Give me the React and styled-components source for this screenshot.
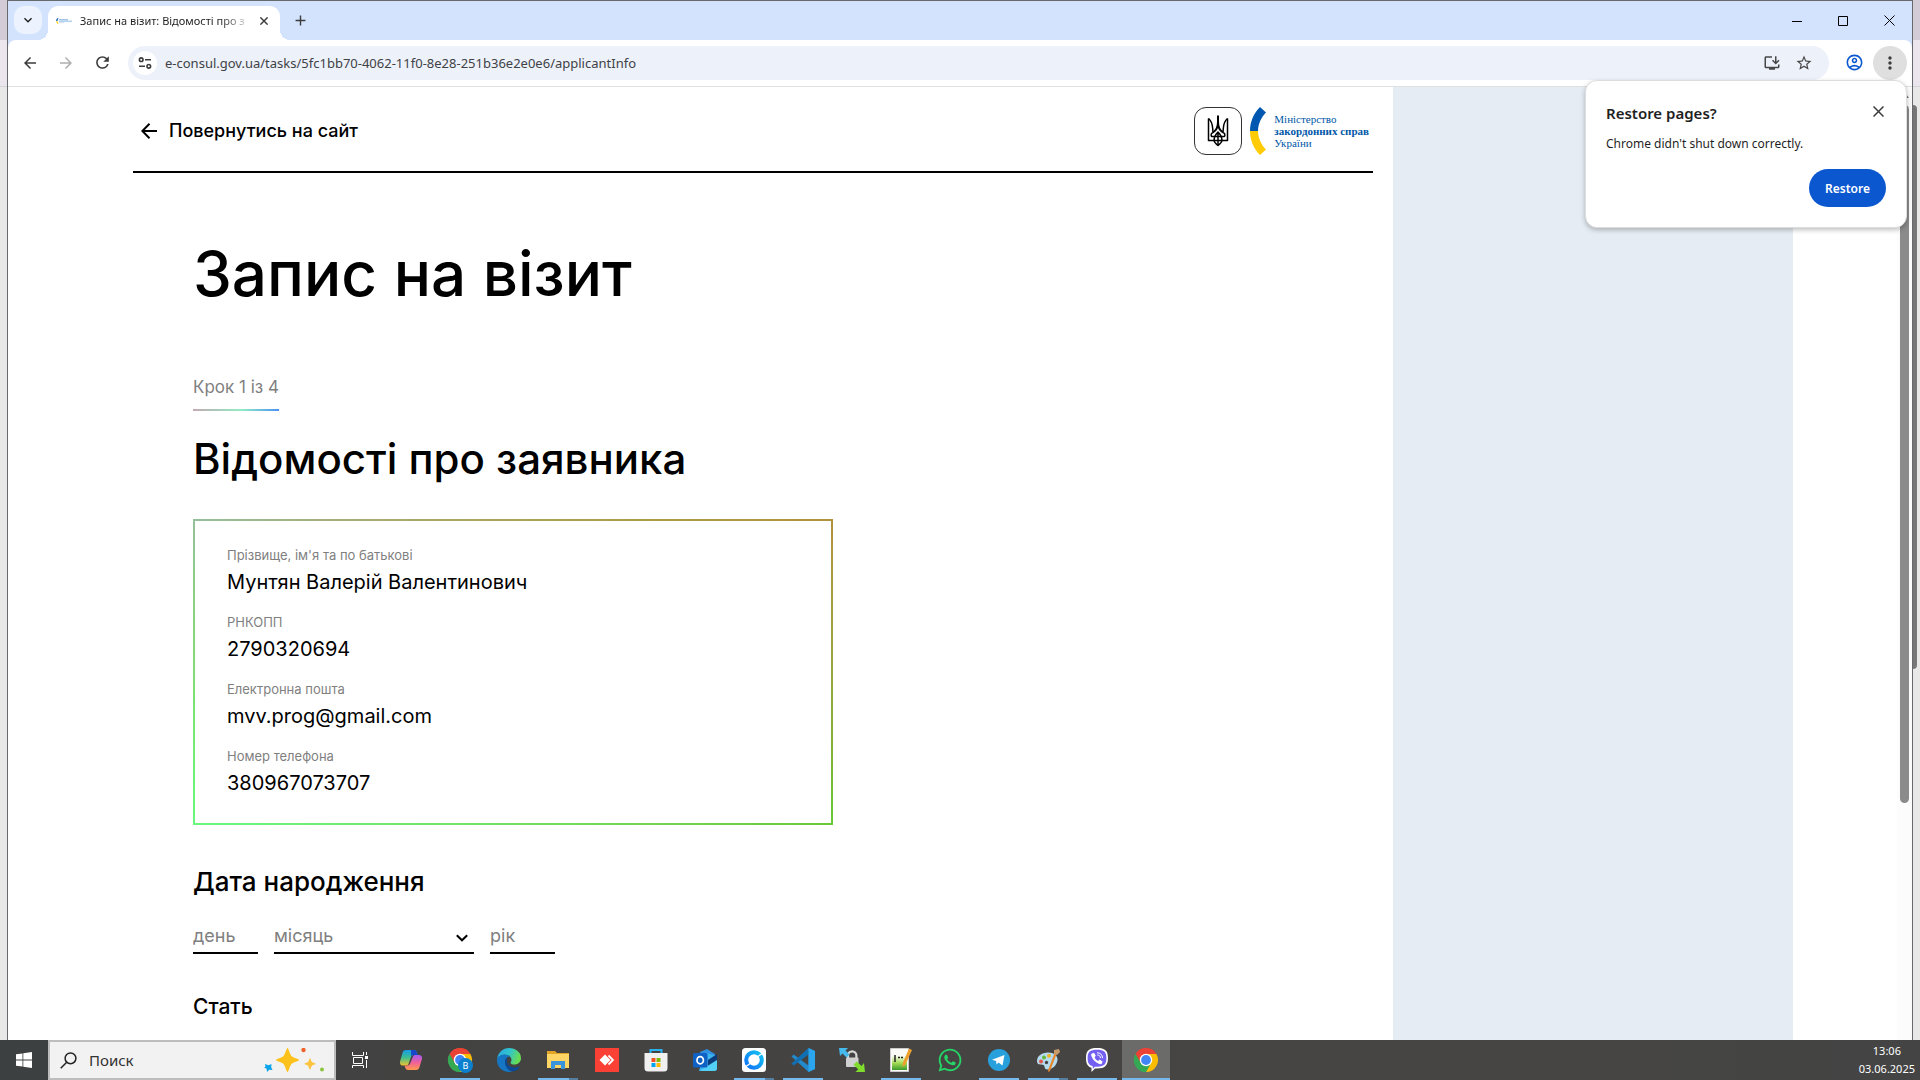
import React from "react";
import styled, { createGlobalStyle, css } from "styled-components";
import {
  MdArrowBack, MdArrowForward, MdRefresh, MdStarBorder, MdOutlineInstallDesktop,
  MdOutlineAccountCircle, MdMoreVert, MdAdd, MdKeyboardArrowDown,
} from "react-icons/md";
import { FaWhatsapp } from "react-icons/fa";

const uiFont = `"Segoe UI", "Noto Sans", "Open Sans", sans-serif`;
const siteFont = `"e-Ukraine", Inter, "Liberation Sans", sans-serif`;

const GlobalStyle = createGlobalStyle`
  *, *::before, *::after { box-sizing: border-box; }
  body { margin: 0; overflow: hidden; font-family: ${uiFont}; }
  button, input, select { font: inherit; color: inherit; border: 0; padding: 0; margin: 0; background: none; outline: 0; }
  h1, h2, h3, p, dl, dd { margin: 0; font-weight: inherit; }
  a { color: inherit; text-decoration: none; }
  svg { display: block; flex: none; }
`;

/* ---------- desktop and window ---------- */
const Desktop = styled.div`
  display: flex;
  flex-direction: column;
  height: 100vh;
`;
const Stage = styled.div`
  flex: 1;
  min-height: 0;
  display: flex;
  background: linear-gradient(#d3cbd6 0 40px, #ebe5ee 40px 86px, #d5d3d6 86px 87px, #e8e8e8 87px);
`;
const Edge = styled.div`
  width: 7px;
  flex: none;
  display: flex;
  flex-direction: column;
`;
const BackThumb = styled.div`
  width: 4px;
  height: 564px;
  margin-top: 105px;
  background: #777;
  border-radius: 0 4px 4px 0;
`;
const Window = styled.div`
  position: relative;
  flex: 1;
  min-width: 0;
  display: flex;
  flex-direction: column;
  border: 1px solid #68696c;
  border-bottom: 0;
  background: #d3e3fd;
`;

/* ---------- tab strip ---------- */
const TabStrip = styled.div`
  display: flex;
  align-items: flex-end;
  height: 39px;
  flex: none;
  padding-left: 6px;
`;
const TabSearch = styled.button`
  display: grid;
  place-items: center;
  width: 28px;
  height: 28px;
  margin: 0 6px 6px 0;
  border-radius: 10px;
  background: #ecf3fe;
  color: #1f1f1f;
`;
const Tab = styled.div`
  position: relative;
  display: flex;
  align-items: center;
  gap: 8px;
  width: 232px;
  height: 34px;
  padding: 0 8px 4px 8px;
  border-radius: 10px 10px 0 0;
  background: #fff;
  &::before, &::after {
    content: "";
    position: absolute;
    bottom: 0;
    width: 10px;
    height: 10px;
  }
  &::before { left: -10px; background: radial-gradient(circle at 0 0, transparent 10px, #fff 10px); }
  &::after { right: -10px; background: radial-gradient(circle at 100% 0, transparent 10px, #fff 10px); }
`;
const TabTitle = styled.span`
  flex: 1;
  white-space: nowrap;
  font-size: 11px;
  line-height: 16px;
  color: #1f1f1f;
  mask-image: linear-gradient(90deg, #000 140px, transparent 172px);
`;
const PlainButton = styled.button`
  display: grid;
  place-items: center;
  width: ${(p) => p.$w || 16}px;
  height: ${(p) => p.$h || 16}px;
  color: ${(p) => p.$color || "#3c3c3c"};
`;
const NewTab = styled(PlainButton)`
  margin: 0 0 6px 6px;
`;
const WindowButtons = styled.div`
  display: flex;
  margin-left: auto;
  align-self: flex-start;
`;

/* ---------- toolbar ---------- */
const Toolbar = styled.div`
  display: flex;
  align-items: center;
  flex: none;
  height: 47px;
  padding: 0 5px 1px 4px;
  background: #fff;
  border-bottom: 1px solid #dfe1e0;
  border-radius: 8px 8px 0 0;
`;
const Omnibox = styled.label`
  flex: 1;
  display: flex;
  align-items: center;
  height: 34px;
  margin: 0 16px 0 8px;
  padding: 0 15px 0 5px;
  border-radius: 17px;
  background: #edf1fa;
  color: #444;
`;
const SiteInfo = styled.span`
  display: grid;
  place-items: center;
  width: 24px;
  height: 24px;
  border-radius: 50%;
  background: #fff;
`;
const Address = styled.input`
  flex: 1;
  min-width: 0;
  height: 20px;
  margin-left: 8px;
  font-size: 13px;
  line-height: 20px;
  color: #404246;
`;
const OmniActions = styled.span`
  display: flex;
  gap: 12px;
`;
const MenuButton = styled(PlainButton)`
  margin-left: 10px;
  border-radius: 50%;
  background: #dfdfdf;
`;

/* ---------- restore bubble ---------- */
const Bubble = styled.div`
  position: absolute;
  top: 79px;
  right: 5px;
  z-index: 2;
  display: flex;
  flex-direction: column;
  width: 322px;
  padding: 20px;
  border: 1px solid #dcdddf;
  border-radius: 12px;
  background: #fff;
  box-shadow: 0 2px 5px rgba(0, 0, 0, 0.25);
  color: #1f1f1f;
`;
const BubbleHead = styled.div`
  display: flex;
  justify-content: space-between;
  font-size: 15px;
  font-weight: 600;
  line-height: 24px;
`;
const BubbleText = styled.p`
  margin: 10px 0 16px;
  font-size: 12px;
  line-height: 18px;
`;
const RestoreButton = styled.button`
  align-self: flex-end;
  width: 77px;
  height: 38px;
  border-radius: 19px;
  background: #0b57d0;
  color: #fff;
  font-size: 12px;
  font-weight: 600;
`;

/* ---------- page ---------- */
const Viewport = styled.div`
  flex: 1;
  min-height: 0;
  display: flex;
  background: #fff;
`;
const ScrollTrack = styled.div`
  display: flex;
  flex-direction: column;
  align-items: center;
  width: 15px;
  padding-top: 5px;
  background: #fcfcfc;
  color: #777;
`;
const ScrollThumb = styled.div`
  width: 9px;
  height: 698px;
  margin-top: 7px;
  border-radius: 5px;
  background: #8b8b8b;
`;
const Page = styled.div`
  flex: 1;
  min-width: 0;
  display: grid;
  grid-template-columns: minmax(0, 1fr) 400px 104px;
  overflow: hidden;
  font-family: ${siteFont};
  color: #000;
`;
const Aside = styled.aside`
  background: #e5ecf3;
`;
const Main = styled.main`
  padding: 0 20px 0 125px;
`;
const SiteHeader = styled.header`
  display: flex;
  align-items: center;
  justify-content: space-between;
  height: 86px;
  padding: 4px 4px 0 8px;
  border-bottom: 2px solid #000;
`;
const BackLink = styled.a`
  display: flex;
  align-items: center;
  gap: 12px;
  font-size: 18px;
  line-height: 24px;
  font-weight: 500;
`;
const Logos = styled.div`
  display: flex;
  align-items: center;
  gap: 8px;
`;
const Emblem = styled.div`
  display: grid;
  place-items: center;
  width: 48px;
  height: 48px;
  border: 1px solid #333;
  border-radius: 12px;
`;
const Ministry = styled.div`
  display: flex;
  flex-direction: column;
  font-family: "Roboto Slab", "Liberation Serif", serif;
  font-size: 11px;
  line-height: 12px;
  color: #0057a8;
`;
const Content = styled.div`
  padding: 63px 60px 0;
`;
const Title = styled.h1`
  font-size: 62px;
  line-height: 76px;
  font-weight: 500;
`;
const Step = styled.p`
  width: max-content;
  margin-top: 51px;
  padding: 12px 0 10px;
  border-bottom: 2px solid;
  border-image: linear-gradient(90deg, #c3a8b0, #92ecc4 56%, #4a8ff5) 1;
  font-size: 17px;
  line-height: 24px;
  color: #7f7f7f;
`;
const SectionTitle = styled.h2`
  margin: 24px 0 36px;
  font-size: 42px;
  line-height: 48px;
  font-weight: 500;
`;
const Card = styled.dl`
  display: flex;
  flex-direction: column;
  gap: 15px;
  max-width: 640px;
  padding: 24px 32px 25px;
  border: 2px solid transparent;
  background:
    linear-gradient(#fff, #fff) padding-box,
    linear-gradient(to top right, #68f97a, rgba(104, 249, 122, 0) 60%) border-box,
    linear-gradient(to bottom left, #b0923c, rgba(176, 146, 60, 0) 50%) border-box,
    linear-gradient(to bottom right, #9db5a2, #a9b565 30%, #68c02a) border-box;
`;
const Field = styled.div`
  dt {
    font-size: 13px;
    line-height: 20px;
    color: #7f7f7f;
  }
  dd {
    padding-top: 3px;
    font-size: 20px;
    line-height: 29px;
  }
`;
const GroupTitle = styled.h3`
  margin-top: ${(p) => p.$top}px;
  font-size: ${(p) => p.$size}px;
  line-height: 32px;
  font-weight: 500;
`;
const DateRow = styled.div`
  display: flex;
  gap: 16px;
  margin-top: 22px;
`;
const control = css`
  height: 34px;
  padding-bottom: 1px;
  border-bottom: 2px solid #000;
  font-size: 18px;
  line-height: 28px;
  color: #7f7f7f;
  border-radius: 0;
`;
const DateInput = styled.input`
  ${control}
  width: 65px;
  &::placeholder { color: #7f7f7f; opacity: 1; }
`;
const MonthBox = styled.div`
  position: relative;
  svg {
    position: absolute;
    right: 6px;
    top: 14px;
    pointer-events: none;
  }
`;
const MonthSelect = styled.select`
  ${control}
  width: 200px;
  appearance: none;
`;

/* ---------- taskbar ---------- */
const Taskbar = styled.footer`
  display: flex;
  flex: none;
  height: 40px;
  background: linear-gradient(90deg, #3c4041, #444341 30%, #464543 70%, #444);
  color: #fff;
`;
const TaskButton = styled.button`
  position: relative;
  display: grid;
  place-items: center;
  width: 48px;
  height: 40px;
  background: ${(p) => (p.$active ? "#6b6b6a" : "none")};
  &::after {
    content: "";
    display: ${(p) => (p.$running ? "block" : "none")};
    position: absolute;
    bottom: 0;
    left: ${(p) => (p.$active ? 0 : 4)}px;
    right: ${(p) => (p.$active ? 0 : 4)}px;
    height: 2px;
    background: ${(p) =>
      p.$stacked
        ? "linear-gradient(90deg, #76b9ed 31px, #567f9f 31px)"
        : "#76b9ed"};
  }
`;
const SearchBox = styled.label`
  display: flex;
  align-items: center;
  width: 288px;
  padding: 0 10px;
  border: 2px solid #bdbdbd;
  background: #f2f2f2;
  color: #222;
`;
const SearchInput = styled.input`
  flex: 1;
  min-width: 0;
  margin-left: 12px;
  font-size: 15px;
  line-height: 20px;
  &::placeholder { color: #333; opacity: 1; }
`;
const Apps = styled.nav`
  display: flex;
  gap: 1px;
  margin-left: 3px;
`;
const Clock = styled.div`
  display: flex;
  flex-direction: column;
  align-items: center;
  justify-content: center;
  margin-left: auto;
  padding-right: 5px;
  font-size: 11px;
  line-height: 18px;
`;

/* ---------- drawings ---------- */
const CloseX = ({ size = 11, stroke = 1 }) => (
  <svg width={size} height={size} viewBox="0 0 11 11" stroke="currentColor" strokeWidth={stroke}>
    <path d="M.5 .5l10 10M10.5 .5l-10 10" />
  </svg>
);
const Favicon = () => (
  <svg width="16" height="16" viewBox="0 0 16 16">
    <path d="M2 5C0 6 .3 7 .3 8H1.500C1.500 7 2 6 2.500 5.500z" fill="#0057b8" />
    <path d="M.3 8c0 1 .5 2.500 1.700 3l.5-.7C1.700 9.500 1.500 9 1.500 8z" fill="#fc0" />
    <rect x="3" y="6" width="9" height="1.500" fill="#9fc3e6" />
    <rect x="3" y="7.500" width="13" height="1.600" fill="#b5d3ee" />
    <rect x="3" y="9.100" width="5" height="1" fill="#cfe1f2" />
  </svg>
);
const Tune = () => (
  <svg width="14" height="14" viewBox="0 0 14 14" fill="none" stroke="#3c3c3c" strokeWidth="1.600">
    <circle cx="3.200" cy="3.700" r="1.800" />
    <path d="M7 3.700h6M1 10.300h6" />
    <circle cx="10.800" cy="10.300" r="1.800" />
  </svg>
);
const Trident = () => (
  <svg width="22" height="34" viewBox="0 0 22 34" fill="none" stroke="#000" strokeWidth="1.500" strokeLinejoin="round">
    <path d="M11 1.500v9M11 8c0 5-1 8-5 10.500M11 8c0 5 1 8 5 10.500" strokeWidth="2" />
    <path d="M1.500 4.500v22h5.500c.3 2 1.800 3.200 4 5 2.200-1.800 3.700-3 4-5h5.500v-22" />
    <path d="M1.500 4.500c3 2.500 4 6 4.200 10l.3 4c-1.800.5-2.300 2-1.500 4h13c.8-2 .3-3.500-1.500-4l.3-4c.2-4 1.200-7.500 4.200-10" />
    <path d="M11 18v13M7 26.500c0-3.500 1.500-6 4-8.500 2.500 2.500 4 5 4 8.500M7 26.500h8" />
  </svg>
);
const Arc = () => (
  <svg width="16" height="48" viewBox="0 0 16 48">
    <path d="M10 0l6 5.500C11.500 10 8 17 8 24H0C0 15 3.500 6.500 10 0z" fill="#0057b0" />
    <path d="M10 48l6-5.500C11.500 38 8 31 8 24H0c0 9 3.500 17.500 10 24z" fill="#ffcb05" />
  </svg>
);
const BackArrow = () => (
  <svg width="16" height="16" viewBox="0 0 16 16" fill="none" stroke="#000" strokeWidth="2">
    <path d="M16 8H1.500M8.500 .8L1.300 8l7.200 7.200" />
  </svg>
);
const Chevron = () => (
  <svg width="12" height="8" viewBox="0 0 12 8" fill="none" stroke="#000" strokeWidth="2">
    <path d="M.8 1.200L6 6.300l5.200-5.100" />
  </svg>
);
const Sparkles = () => (
  <svg width="60" height="24" viewBox="0 0 60 24">
    <path d="M23.500 0c1 0 2.500 7 4.500 8.500S35 11 35 12s-5 2-7 3.500S24.500 24 23.500 24 21 17 19 15.500 12 13 12 12s5-2 7-3.500S22.500 0 23.500 0z" fill="#fcc21b" />
    <path d="M46 10c.6 0 1 3 2 4s3.500 1 3.500 1.700-2.500 1-3.500 2-1.400 4-2 4-1-3-2-4-3.500-1.300-3.500-2 2.500-.7 3.500-1.700 1.400-4 2-4z" fill="#fbc440" />
    <path d="M1 16l3.500 1.300L7.500 16l-.3 3.200L8.500 22l-3.200-.3L3 24l-.4-3.200L0 19.300l1.500-.6z" fill="#0ba4e8" />
    <circle cx="39.500" cy="2" r="2.200" fill="#f0622a" />
    <circle cx="58" cy="21.500" r="2" fill="#8bc540" />
  </svg>
);
const WindowsLogo = () => (
  <svg width="16" height="16" viewBox="0 0 16 16" fill="#fff">
    <path d="M0 2.300L6.500 1.400V7.600H0zM7.300 1.300L16 0v7.600H7.300zM0 8.400h6.500v6.200L0 13.700zM7.300 8.400H16V16l-8.700-1.300z" />
  </svg>
);
const Magnifier = () => (
  <svg width="17" height="17" viewBox="0 0 17 17" fill="none" stroke="#222" strokeWidth="1.500">
    <circle cx="10.500" cy="6.300" r="5.400" />
    <path d="M6.700 10.300L.7 16.300" />
  </svg>
);
const TaskView = () => (
  <svg width="16" height="16" viewBox="0 0 16 16" fill="none" stroke="#fff">
    <path d="M.5 0v3.500h11V0M.5 16v-2.500h11V16M1.500 5.500h9v6h-9zM14.500 0v3M14.500 8v8" />
    <path d="M13 4h3v3h-3z" fill="#fff" stroke="none" />
  </svg>
);
const Copilot = () => (
  <svg width="22" height="20" viewBox="0 0 22 20">
    <defs>
      <linearGradient id="cpA" x1="0" y1="0" x2="0" y2="1">
        <stop offset="0" stopColor="#169bea" /><stop offset=".5" stopColor="#3fbf8f" /><stop offset="1" stopColor="#f2c32c" />
      </linearGradient>
      <linearGradient id="cpB" x1="0" y1="0" x2="0" y2="1">
        <stop offset="0" stopColor="#a45cf0" /><stop offset=".5" stopColor="#f0609a" /><stop offset="1" stopColor="#ff9a4a" />
      </linearGradient>
    </defs>
    <path d="M6 0h8c2 0 2.500 1.500 3 3l.7 2H14c-2 0-2.700 1-3.200 2.500L8.500 14c-.5 1.300-1.200 1.500-2.500 1.500H3c-2.500 0-3.500-2-2.800-4.500L2.500 3C3 1.200 4 0 6 0z" fill="url(#cpA)" />
    <path d="M16 20H8c-2 0-2.500-1.500-3-3l-.5-1.500H7c2 0 2.800-1 3.300-2.500L13 6.500C13.500 5.200 14.500 5 15.500 5H19c2.500 0 3.500 2 2.800 4.500L19.500 17c-.5 1.800-1.500 3-3.500 3z" fill="url(#cpB)" />
    <path d="M11 0h3c2 0 2.500 1.500 3 3l.7 2H14c-1.500 0-2.300.6-2.800 1.500z" fill="#1746c8" />
  </svg>
);
const Chrome = ({ badge }) => (
  <svg width="26" height="26" viewBox="0 0 26 26">
    <path d="M13 13L2.600 7A12 12 0 0 1 23.400 7z" fill="#ea4335" />
    <path d="M13 13L23.400 7A12 12 0 0 1 13 25z" fill="#fbbc04" />
    <path d="M13 13v12A12 12 0 0 1 2.600 7z" fill="#34a853" />
    <path d="M13 7h10.400L18.200 16 13 25l5.200-9z" fill="#fbbc04" />
    <path d="M2.600 7l5.200 9L13 19l5.200-3L13 25A12 12 0 0 1 2.600 7z" fill="#34a853" />
    <path d="M2.600 7A12 12 0 0 1 23.400 7H13L7.800 16z" fill="#ea4335" />
    <circle cx="13" cy="13" r="6.200" fill="#fff" />
    <circle cx="13" cy="13" r="4.900" fill="#4285f4" />
    {badge && <circle cx="18.500" cy="18.500" r="7.500" fill="#0b80cf" />}
    {badge && <text x="18.500" y="22" fontSize="9" fill="#fff" textAnchor="middle">{badge}</text>}
  </svg>
);
const EdgeLogo = () => (
  <svg width="24" height="24" viewBox="0 0 24 24">
    <defs>
      <linearGradient id="edA" x1="0" y1="0" x2="1" y2="0.300">
        <stop offset="0" stopColor="#2aa5e6" /><stop offset=".55" stopColor="#31c4cc" /><stop offset="1" stopColor="#66dc55" />
      </linearGradient>
    </defs>
    <path d="M0 11C1 4.500 6 0 12 0c7 0 12 4.500 12 10 0 4-3 6.500-6.500 6.500-2.500 0-4-1-4-1.800 0-.7 1-1 1-3 0-2.500-2.500-5-6.500-5S1 8.500 0 11z" fill="url(#edA)" />
    <path d="M0 11c1-3 4-4.500 7.500-4.500 2.500 0 4.500.8 5.700 2C10 8.500 8 11 8 14c0 5 4 9 8 9.300C10 25.500 0 22 0 12z" fill="#1577c4" />
    <path d="M10.300 9.500C8.500 10.700 8 12.500 8 14c0 5 4 9.300 8 9.300 3 0 6-2.800 6.500-4.300.2-.5-.2-.8-.7-.5-4.500 2.500-11.500.5-11.800-5 0-1.500.1-2.800.3-4z" fill="#0c4a95" />
  </svg>
);
const Explorer = () => (
  <svg width="22" height="20" viewBox="0 0 22 20">
    <path d="M0 1h8l2 2h12v15H0z" fill="#e0a526" />
    <path d="M0 4h22v14H0z" fill="#ffd666" />
    <path d="M4 11h14v8h-4v-4H8v4H4z" fill="#3a94dc" />
  </svg>
);
const AnyDesk = () => (
  <svg width="24" height="24" viewBox="0 0 24 24">
    <path d="M0 0h24v24H0z" fill="#fb4135" />
    <path d="M10 6.500l5.500 5.500-5.500 5.500L4.500 12z" fill="#fff" />
    <path d="M13.500 7.500L18 12l-4.500 4.500" fill="none" stroke="#fff" strokeWidth="1.800" />
  </svg>
);
const Store = () => (
  <svg width="24" height="24" viewBox="0 0 24 24">
    <path d="M6.500 6V2h11v4" fill="none" stroke="#2bb0ee" strokeWidth="2" />
    <path d="M.5 5h23v15a3.500 3.500 0 0 1-3.500 3.500H4A3.500 3.500 0 0 1 .5 20z" fill="#f0f0f0" />
    <path d="M7.500 10H11.500v4H7.500z" fill="#f25022" /><path d="M12.500 10h4v4h-4z" fill="#7fba00" />
    <path d="M7.500 15h4v4H7.500z" fill="#00a4ef" /><path d="M12.500 15h4v4h-4z" fill="#ffb900" />
  </svg>
);
const Outlook = () => (
  <svg width="24" height="24" viewBox="0 0 24 24">
    <path d="M7 4l7-3 8 5v6H7z" fill="#2f8fe0" />
    <path d="M14 5l10 3v12a3 3 0 0 1-3 3H6l2-7z" fill="#3cb4ee" />
    <path d="M15 12l9-6v8l-9 5z" fill="#0d3c7d" />
    <path d="M8 22L24 12v8a3 3 0 0 1-3 3H8z" fill="#52d0f5" />
    <rect y="5" width="14.500" height="14.500" rx="1.500" fill="#0f62c4" />
    <ellipse cx="7.200" cy="12.200" rx="3.200" ry="3.600" fill="none" stroke="#fff" strokeWidth="1.700" />
  </svg>
);
const RustDesk = () => (
  <svg width="24" height="24" viewBox="0 0 24 24">
    <defs>
      <linearGradient id="rdA" x1="0" y1="1" x2="1" y2="0">
        <stop offset="0" stopColor="#1272f7" /><stop offset="1" stopColor="#12c2f0" />
      </linearGradient>
    </defs>
    <rect width="24" height="24" rx="3.500" fill="#fff" />
    <circle cx="12" cy="12" r="7.800" fill="none" stroke="url(#rdA)" strokeWidth="4" />
    <path d="M2.500 19.500l6-4.200M21.500 4.500l-6 4.200" stroke="#fff" strokeWidth="1.300" />
  </svg>
);
const VsCode = () => (
  <svg width="24" height="24" viewBox="0 0 24 24">
    <path d="M17.500 0L24 3v18l-6.500 3L.5 8.500 2.700 6.500 17.500 17.500z" fill="#2489ca" />
    <path d="M17.500 0v6.500L2.700 17.500.5 15.500z" fill="#1070b3" />
    <path d="M17.500 0L24 3v18l-6.500 3z" fill="#2ba6ee" />
  </svg>
);
const SyncLock = () => (
  <svg width="26" height="24" viewBox="0 0 26 24">
    <path d="M9 10V7.500a4.200 4.200 0 0 1 8.400 0V10" fill="none" stroke="#d8d8d8" strokeWidth="2.200" />
    <rect x="7" y="9.500" width="12.500" height="9.500" rx="1" fill="#d0d0d0" />
    <path d="M0 0h9L6.500 2.500l4 4-3 3-4-4L1 8z" fill="#45b8ec" />
    <path d="M26 24h-9.500l2.700-2.700-4.700-4.500 3.300-3.300 4.700 4.500L25 15z" fill="#7fdb2c" />
  </svg>
);
const NotepadPP = () => (
  <svg width="24" height="24" viewBox="0 0 24 24">
    <defs>
      <linearGradient id="npA" x1="0" y1="0" x2="0" y2="1">
        <stop offset="0" stopColor="#f6fbea" /><stop offset=".5" stopColor="#a4dc55" /><stop offset="1" stopColor="#3c9a2c" />
      </linearGradient>
    </defs>
    <path d="M1.500 .5h18v23h-18z" fill="#fafaf6" stroke="#ccc" />
    <path d="M3 8h15v14H3z" fill="url(#npA)" />
    <path d="M6 7v7" stroke="#222" strokeWidth="1.500" />
    <path d="M9 9.500h2M12 9.500h2" stroke="#222" strokeWidth="1.500" />
    <path d="M20 .5l3 1.500-6.500 14.500-3 2.500.3-4z" fill="#eda02c" />
  </svg>
);
const Paint = () => (
  <svg width="24" height="24" viewBox="0 0 24 24">
    <path d="M1 13c0-5 5-8.500 11-8.500S22 8 21.500 12c-.5 5-5 9.500-10 9.500-4 0-2-3.500-4-4.500S1 18 1 13z" fill="#b5dbee" />
    <circle cx="5" cy="13.500" r="2" fill="#e2574c" /><circle cx="8" cy="9.500" r="2" fill="#67b83c" />
    <circle cx="13" cy="7.800" r="2" fill="#f0b429" /><circle cx="10.500" cy="14.500" r="1.700" fill="#444" />
    <path d="M19 4l2 1-7 18-2 1 .5-3z" fill="#e8872b" />
    <path d="M18 2l5-1 1 3-3 3-3-1z" fill="#c79a6b" />
  </svg>
);
const Viber = () => (
  <svg width="24" height="24" viewBox="0 0 24 24">
    <path d="M12 0c8 0 11 2.500 11 10s-3 10.500-11 10.500h-2L6.500 24v-4.200C2.500 18.500 1 15.500 1 10 1 2.500 4 0 12 0z" fill="#fff" />
    <path d="M12 1.700c7 0 9.400 2 9.400 8.300s-2.400 8.700-9.400 8.700H9.700L7.800 21v-2.700C4 17.200 2.600 14.800 2.600 10 2.600 3.700 5 1.700 12 1.700z" fill="#7360f2" />
    <path d="M7 5.500l2-.8 1.800 3-1.200 1.600c.6 1.800 1.700 2.900 3.500 3.600l1.500-1.300 3 1.900-.9 2.200c-1 .9-2 .6-3 .1C10 14 7.500 11.500 6.200 7.500 6 6.600 6.200 6 7 5.500z" fill="#fff" />
    <path d="M12 4.800c3.500 0 5.500 2 5.500 5.400M12.300 7c2 0 3 1 3.100 3.100" fill="none" stroke="#fff" strokeWidth="1" />
  </svg>
);
const TelegramIcon = () => (
  <svg width="22" height="22" viewBox="0 0 22 22">
    <circle cx="11" cy="11" r="11" fill="#28a0dc" />
    <path d="M4 10.800L16.500 6l-2 10.500-4-3-2 2-.4-3.400z" fill="#fff" />
  </svg>
);

const person = [
  ["Прізвище, ім'я та по батькові", "Мунтян Валерій Валентинович"],
  ["РНКОПП", "2790320694"],
  ["Електронна пошта", "mvv.prog@gmail.com"],
  ["Номер телефона", "380967073707"],
];

const apps = [
  { name: "Copilot", icon: <Copilot /> },
  { name: "Chrome B", icon: <Chrome badge="B" />, running: true },
  { name: "Edge", icon: <EdgeLogo /> },
  { name: "Explorer", icon: <Explorer />, running: true, stacked: true },
  { name: "AnyDesk", icon: <AnyDesk /> },
  { name: "Store", icon: <Store /> },
  { name: "Outlook", icon: <Outlook /> },
  { name: "RustDesk", icon: <RustDesk />, running: true, stacked: true },
  { name: "VS Code", icon: <VsCode />, running: true },
  { name: "WinSCP", icon: <SyncLock /> },
  { name: "Notepad++", icon: <NotepadPP />, running: true },
  { name: "WhatsApp", icon: <FaWhatsapp size={26} color="#25d366" /> },
  { name: "Telegram", icon: <TelegramIcon />, running: true },
  { name: "Paint", icon: <Paint />, running: true, stacked: true },
  { name: "Viber", icon: <Viber />, running: true },
  { name: "Chrome", icon: <Chrome />, running: true, active: true },
];

export default function App() {
  return (
    <Desktop>
      <GlobalStyle />
      <Stage>
        <Edge />
        <Window>
          <TabStrip>
            <TabSearch aria-label="Search tabs"><MdKeyboardArrowDown size={16} /></TabSearch>
            <Tab>
              <Favicon />
              <TabTitle>Запис на візит: Відомості про з</TabTitle>
              <PlainButton aria-label="Close tab"><CloseX size={8} stroke={2} /></PlainButton>
            </Tab>
            <NewTab $w={28} $h={28} aria-label="New tab"><MdAdd size={17} /></NewTab>
            <WindowButtons>
              <PlainButton $w={46} $h={39} $color="#000" aria-label="Minimize">
                <svg width="10" height="10" viewBox="0 0 10 10" stroke="#000"><path d="M0 5.500h10" /></svg>
              </PlainButton>
              <PlainButton $w={46} $h={39} $color="#000" aria-label="Maximize">
                <svg width="10" height="10" viewBox="0 0 10 10" fill="none" stroke="#000"><path d="M.5 .5h9v9h-9z" /></svg>
              </PlainButton>
              <PlainButton $w={46} $h={39} $color="#000" aria-label="Close"><CloseX /></PlainButton>
            </WindowButtons>
          </TabStrip>
          <Toolbar>
            <PlainButton $w={36} $h={34} aria-label="Back"><MdArrowBack size={18} /></PlainButton>
            <PlainButton $w={36} $h={34} $color="#b0b0b0" aria-label="Forward"><MdArrowForward size={18} /></PlainButton>
            <PlainButton $w={36} $h={34} aria-label="Reload"><MdRefresh size={19} /></PlainButton>
            <Omnibox>
              <SiteInfo><Tune /></SiteInfo>
              <Address
                aria-label="Address"
                readOnly
                value="e-consul.gov.ua/tasks/5fc1bb70-4062-11f0-8e28-251b36e2e0e6/applicantInfo"
              />
              <OmniActions>
                <PlainButton $w={20} $h={20} $color="#474747" aria-label="Install"><MdOutlineInstallDesktop size={18} /></PlainButton>
                <PlainButton $w={20} $h={20} $color="#474747" aria-label="Bookmark"><MdStarBorder size={18} /></PlainButton>
              </OmniActions>
            </Omnibox>
            <PlainButton $w={18} $h={20} $color="#0b57d0" aria-label="Profile"><MdOutlineAccountCircle size={19} /></PlainButton>
            <MenuButton $w={34} $h={34} aria-label="Menu"><MdMoreVert size={20} /></MenuButton>
          </Toolbar>

          <Viewport>
            <Page>
              <Main>
                <SiteHeader>
                  <BackLink href="#"><BackArrow />Повернутись на сайт</BackLink>
                  <Logos>
                    <Emblem><Trident /></Emblem>
                    <Arc />
                    <Ministry>
                      <span>Міністерство</span>
                      <b>закордонних справ</b>
                      <span>України</span>
                    </Ministry>
                  </Logos>
                </SiteHeader>
                <Content>
                  <Title>Запис на візит</Title>
                  <Step>Крок 1 із 4</Step>
                  <SectionTitle>Відомості про заявника</SectionTitle>
                  <Card>
                    {person.map(([label, value]) => (
                      <Field key={label}>
                        <dt>{label}</dt>
                        <dd>{value}</dd>
                      </Field>
                    ))}
                  </Card>
                  <GroupTitle $top={41} $size={26}>Дата народження</GroupTitle>
                  <DateRow>
                    <DateInput aria-label="день" placeholder="день" />
                    <MonthBox>
                      <MonthSelect aria-label="місяць" defaultValue="">
                        <option value="">місяць</option>
                      </MonthSelect>
                      <Chevron />
                    </MonthBox>
                    <DateInput aria-label="рік" placeholder="рік" />
                  </DateRow>
                  <GroupTitle $top={37} $size={21}>Стать</GroupTitle>
                </Content>
              </Main>
              <Aside />
            </Page>
            <ScrollTrack>
              <svg width="9" height="6" viewBox="0 0 9 6" fill="currentColor"><path d="M4.500 0L9 6H0z" /></svg>
              <ScrollThumb />
            </ScrollTrack>
          </Viewport>

          <Bubble role="dialog" aria-label="Restore pages?">
            <BubbleHead>
              Restore pages?
              <PlainButton $h={20} aria-label="Dismiss"><CloseX size={11} stroke={1.5} /></PlainButton>
            </BubbleHead>
            <BubbleText>Chrome didn't shut down correctly.</BubbleText>
            <RestoreButton>Restore</RestoreButton>
          </Bubble>
        </Window>
        <Edge><BackThumb /></Edge>
      </Stage>
      <Taskbar>
        <TaskButton aria-label="Start"><WindowsLogo /></TaskButton>
        <SearchBox>
          <Magnifier />
          <SearchInput aria-label="Поиск" placeholder="Поиск" />
          <Sparkles />
        </SearchBox>
        <TaskButton aria-label="Task view"><TaskView /></TaskButton>
        <Apps>
          {apps.map((a) => (
            <TaskButton key={a.name} aria-label={a.name} $running={a.running} $stacked={a.stacked} $active={a.active}>
              {a.icon}
            </TaskButton>
          ))}
        </Apps>
        <Clock>
          <span>13:06</span>
          <span>03.06.2025</span>
        </Clock>
      </Taskbar>
    </Desktop>
  );
}
